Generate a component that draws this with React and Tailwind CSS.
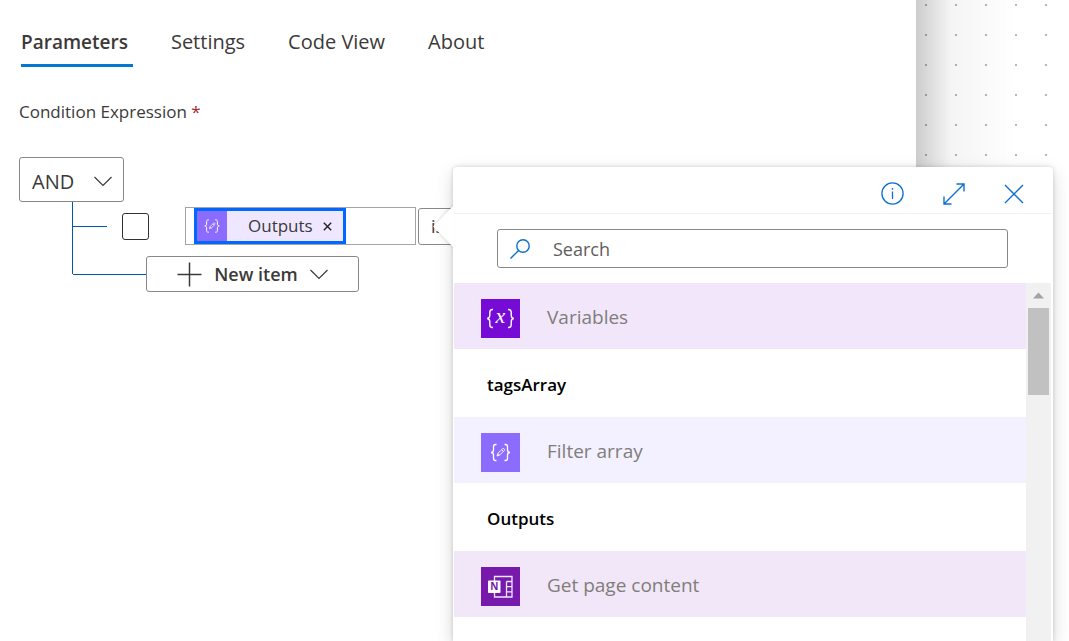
import React from "react";

const tabs = ["Parameters", "Settings", "Code View", "About"];

function ChevronDown() {
  return (
    <svg width="18" height="11" viewBox="0 0 18 11" fill="none" stroke="#3b3a39" strokeWidth="1.2" aria-hidden="true">
      <path d="M0.5 1L9 9.5L17.5 1" />
    </svg>
  );
}

function Pencil({ size }) {
  return (
    <svg width={size} height={size} viewBox="0 0 39 39" fill="none" stroke="#fff" strokeWidth="1.3" aria-hidden="true">
      <path d="M15.5 11.5h-1c-1.6 0-2 .8-2 2.2v3.4c0 1.4-.8 2.4-2.5 2.4 1.700 0 2.500 1 2.500 2.400v3.400c0 1.400.4 2.200 2 2.200h1" />
      <path d="M23.500 11.500h1c1.600 0 2 .8 2 2.200v3.400c0 1.400.8 2.400 2.500 2.400-1.700 0-2.500 1-2.500 2.400v3.400c0 1.400-.4 2.200-2 2.200h-1" />
      <path d="M16 23l.8-2.600 4.900-4.700c.9-.8 2.500.8 1.700 1.700l-4.800 4.800zM20.700 16.700l1.700 1.700M16.800 20.400l1.800 1.800" strokeWidth=".9" />
    </svg>
  );
}

function VariableIcon() {
  return (
    <svg width="39" height="39" viewBox="0 0 39 39" aria-hidden="true">
      <g fill="none" stroke="#fff" strokeWidth="1.400">
        <path d="M12 10.500h-.5c-2 0-2.700.9-2.700 2.800v3c0 1.900-.8 3-2.600 3.200 1.800.2 2.600 1.300 2.600 3.200v3c0 1.900.7 2.800 2.700 2.800h.5" />
        <path d="M27 10.500h.5c2 0 2.700.9 2.700 2.800v3c0 1.900.8 3 2.600 3.200-1.800.2-2.600 1.300-2.600 3.200v3c0 1.900-.7 2.800-2.700 2.800H27" />
      </g>
      <text x="19.500" y="24" textAnchor="middle" fill="#fff" className="font-['Liberation_Serif',serif] text-[22px] italic">x</text>
    </svg>
  );
}

function NotebookIcon() {
  return (
    <svg width="39" height="39" viewBox="0 0 39 39" aria-hidden="true">
      <path d="M13.500 9.500h17.500v20.500H13.500zM25.500 14.500v15.500M25.500 14.500H31M25.500 19.700H31M25.500 24.900H31" fill="none" stroke="#f3e8fa" strokeWidth="1.300" />
      <rect x="7" y="13.500" width="12.500" height="12.500" rx=".8" fill="#fff" />
      <text x="13.250" y="23.300" textAnchor="middle" fill="#7719aa" className="text-[10px] font-bold">N</text>
    </svg>
  );
}

function Group({ icon, tile, band, title, children }) {
  return (
    <section>
      <h3 className={`flex h-[66px] items-center gap-[27px] pt-0.5 pl-[27px] text-[19px] leading-6 text-[#807d7a] ${band}`}>
        <span className={`mt-[3px] size-[39px] shrink-0 ${tile}`}>{icon}</span>
        {title}
      </h3>
      {children && (
        <button type="button" className="flex h-[68px] w-full items-center bg-white pt-1 pl-[33px] text-left text-[17px] leading-6 font-semibold text-black">
          {children}
        </button>
      )}
    </section>
  );
}

function DynamicContentPicker() {
  return (
    <div role="dialog" aria-label="Dynamic content" className="absolute top-[167px] right-4 bottom-0 z-10 flex w-[600px] flex-col rounded-t bg-white px-px shadow-[0_6px_18px_rgba(0,0,0,0.16),0_0_4px_rgba(0,0,0,0.16)]">
      <svg className="absolute top-[38px] -left-5 drop-shadow-[-1px_0_1px_rgba(0,0,0,0.12)]" width="21" height="43" viewBox="0 0 21 43" aria-hidden="true">
        <path d="M21 0L0 21.500L21 43z" fill="#fff" />
      </svg>
      <header className="flex h-[47px] shrink-0 items-center justify-end gap-[39px] border-b border-[#f3f2f1] pt-[7px] pr-7">
        <button type="button" aria-label="Information">
          <svg width="23" height="23" viewBox="0 0 23 23" fill="none" stroke="#0f6fd0" strokeWidth="1.300">
            <circle cx="11.500" cy="11.500" r="10.600" />
            <path d="M11.500 9.500v7.500M11.500 6v1.700" />
          </svg>
        </button>
        <button type="button" aria-label="Expand">
          <svg width="22" height="22" viewBox="0 0 22 22" fill="none" stroke="#0f6fd0" strokeWidth="1.400">
            <path d="M1 21L21 1M13.500 1H21v7.500M1 13.500V21h7.500" />
          </svg>
        </button>
        <button type="button" aria-label="Close">
          <svg width="20" height="20" viewBox="0 0 20 20" fill="none" stroke="#0f6fd0" strokeWidth="1.400">
            <path d="M1 1L19 19M19 1L1 19" />
          </svg>
        </button>
      </header>
      <div className="shrink-0 pt-[15px] pr-11 pb-[15px] pl-[43px]">
        <label className="flex h-[39px] items-center gap-[23px] rounded-[3px] border border-[#8a8886] pl-3">
          <svg width="20" height="20" viewBox="0 0 20 20" fill="none" stroke="#0f6fd0" strokeWidth="1.400" aria-hidden="true">
            <circle cx="13" cy="7" r="6.200" />
            <path d="M8.600 11.400L.5 19.500" />
          </svg>
          <input type="text" placeholder="Search" aria-label="Search" className="min-w-0 flex-1 text-[18px] leading-6 outline-none placeholder:text-[#605e5c]" />
        </label>
      </div>
      <div className="flex min-h-0 flex-1 pr-px">
        <div className="min-w-0 flex-1 overflow-hidden">
          <Group title="Variables" band="bg-[#f2e7fa]" tile="bg-[#770bd6]" icon={<VariableIcon />}>tagsArray</Group>
          <Group title="Filter array" band="bg-[#f3f0ff]" tile="bg-[#8c6cff]" icon={<Pencil size={39} />}>Outputs</Group>
          <Group title="Get page content" band="bg-[#f2e7f8]" tile="bg-[#7719aa]" icon={<NotebookIcon />} />
        </div>
        <div className="flex w-[25px] flex-col items-center bg-[#f1f1f1]" aria-hidden="true">
          <svg className="my-[9px]" width="11" height="7" viewBox="0 0 11 7">
            <path d="M5.500 .5L11 6.500H0z" fill="#a3a3a3" />
          </svg>
          <span className="h-[87px] w-[21px] bg-[#c1c1c1]" />
        </div>
      </div>
    </div>
  );
}

export default function App() {
  return (
    <div className="relative flex min-h-screen overflow-hidden bg-white font-['Open_Sans','Noto_Sans',sans-serif] text-[#3b3a39]">
      <main className="min-w-0 flex-1 bg-white pl-[19px]">
        <nav className="flex gap-[38px] pt-[27px] pl-0.5">
          {tabs.map((tab, i) => (
            <button
              key={tab}
              type="button"
              className={`border-b-3 pr-[5px] pb-[7px] leading-[30px] ${i === 0 ? "border-[#0078d4] text-[19px] font-semibold" : "border-transparent text-[20px]"}`}
            >
              {tab}
            </button>
          ))}
        </nav>
        <h2 className="mt-[33px] text-[17px] leading-6">
          Condition Expression <span className="text-[#a4262c]">*</span>
        </h2>
        <button type="button" className="mt-[33px] flex h-[45px] w-[105px] items-center justify-between rounded-[3px] border border-[#8a8886] pt-1 pr-[11px] pl-3 text-[20px] leading-6">
          AND
          <ChevronDown />
        </button>
        <div className="ml-[53px] flex">
          <span className="mb-[18px] w-px bg-[#0058ad]" />
          <div className="flex flex-1 flex-col gap-[11px] pt-[5px]">
            <div className="flex h-[38px] items-center">
              <span className="h-px w-[34px] bg-[#0058ad]" />
              <input type="checkbox" aria-label="Select row" className="ml-[15px] size-[27px] appearance-none rounded-[3px] border border-[#323130]" />
              <div className="ml-9 flex h-[38px] w-[231px] items-center border border-[#a6a4a2] pl-2">
                <span className="flex h-9 w-[152px] items-center border-3 border-[#0067ff] bg-[#eee7ff] text-[17px] leading-6">
                  <span className="flex h-full w-[30px] items-center justify-center bg-[#8c6cff]">
                    <Pencil size={32} />
                  </span>
                  <span className="ml-[21px]">Outputs</span>
                  <button type="button" aria-label="Remove Outputs" className="ml-2.5">
                    <svg width="9" height="9" viewBox="0 0 9 9" stroke="#222" strokeWidth="1.400">
                      <path d="M.8 .8L8.200 8.200M8.200 .8L.8 8.200" />
                    </svg>
                  </button>
                </span>
              </div>
              <select aria-label="Operator" className="ml-0.5 h-[37px] w-[160px] appearance-none rounded-[3px] border border-[#8a8886] bg-white pl-3 text-[18px]">
                <option>is equal to</option>
              </select>
            </div>
            <div className="flex items-center">
              <span className="h-px w-[73px] bg-[#0058ad]" />
              <button type="button" className="flex h-9 w-[213px] items-center justify-center gap-3 rounded-[3px] border border-[#8a8886] text-[18px] leading-6 font-semibold">
                <svg width="25" height="25" viewBox="0 0 25 25" stroke="#3b3a39" strokeWidth="1.500" aria-hidden="true">
                  <path d="M12.500 .5v24M.5 12.500h24" />
                </svg>
                New item
                <ChevronDown />
              </button>
            </div>
          </div>
        </div>
      </main>
      <aside className="flex w-[153px] shrink-0 bg-[radial-gradient(circle,#b5b5b5_1px,transparent_1.5px)] bg-[size:30px_30px] bg-[position:-5px_-10px]">
        <div className="w-[100px] bg-linear-to-r from-black/20 via-black/4 via-35% to-transparent" />
      </aside>
      <DynamicContentPicker />
    </div>
  );
}
